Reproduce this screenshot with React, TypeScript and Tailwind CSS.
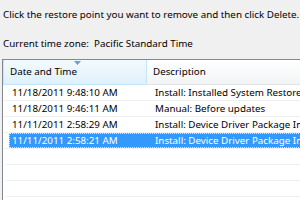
import React from 'react';

type RestorePoint = {
  date: string;
  description: string;
};

const POINTS: RestorePoint[] = [
  { date: '11/18/2011 9:48:10 AM', description: 'Install: Installed System Restore Point' },
  { date: '11/18/2011 9:46:11 AM', description: 'Manual: Before updates' },
  { date: '11/11/2011 2:58:29 AM', description: 'Install: Device Driver Package Install: Intel' },
  { date: '11/11/2011 2:58:21 AM', description: 'Install: Device Driver Package Install: Intel' },
];

const SELECTED = 3;

const SortArrow: React.FC = () => (
  <svg width="7" height="4" viewBox="0 0 7 4" className="absolute left-[70px] top-[1px]">
    <path d="M0 0 H7 L3.5 4 Z" fill="#6a9fcf" />
  </svg>
);

const App: React.FC = () => {
  return (
    <div className="w-[300px] h-[200px] overflow-hidden bg-[#f0f0f0] text-[9.8px] leading-[16px] text-black font-['Noto_Sans','Liberation_Sans',sans-serif]">
      <p className="pl-[3px] pt-[7px] whitespace-nowrap">
        Click the restore point you want to remove and then click Delete.
      </p>
      <div className="flex pl-[3px] mt-[13px] whitespace-nowrap">
        <span className="w-[91px]">Current time zone:</span>
        <span>Pacific Standard Time</span>
      </div>

      <div className="ml-[2px] mt-[7px] w-[340px] h-[200px] bg-white border-l border-t border-[#828790]">
        <div className="flex h-[25px]">
          <div className="relative w-[144px] flex items-center pl-[6px] bg-gradient-to-b from-[#f3fafe] to-[#dff1fb] border border-[#c5e5f7] border-t-0">
            <SortArrow />
            Date and Time
          </div>
          <div className="flex-1 flex items-center pl-[6px] bg-gradient-to-b from-white to-[#f3f4f5] border-b border-[#e3e5e8]">
            Description
          </div>
        </div>

        {POINTS.map((p, i) => (
          <div key={p.date} className="flex h-[16px] pl-[1px] border-b border-[#f0f0f0]">
            <div
              className={
                i === SELECTED
                  ? 'ml-[5px] flex flex-1 bg-[#3399ff] text-white outline outline-dotted outline-[#cfe6ff] -outline-offset-1'
                  : 'ml-[5px] flex flex-1'
              }
            >
              <span className="w-[139px] pl-[3px] whitespace-nowrap">{p.date}</span>
              <span className="pl-[7px] whitespace-nowrap">{p.description}</span>
            </div>
          </div>
        ))}

        {[0, 1, 2].map((n) => (
          <div key={n} className="h-[16px] ml-[2px] border-b border-[#f0f0f0]" />
        ))}
      </div>
    </div>
  );
};

export default App;
